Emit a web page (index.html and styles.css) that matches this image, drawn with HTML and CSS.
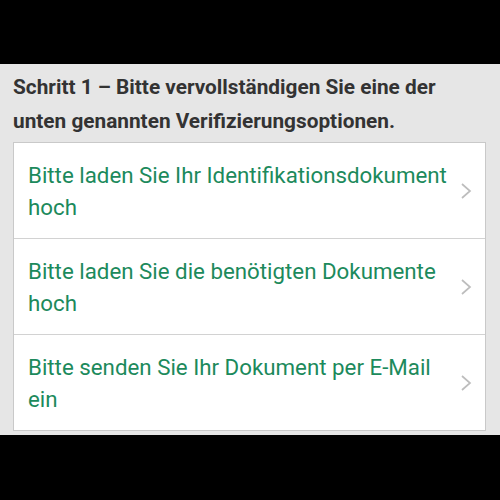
FILE: index.html
```html
<!DOCTYPE html>
<html lang="de">
<head>
<meta charset="utf-8">
<link rel="stylesheet" href="styles.css">
</head>
<body>
<div class="top"></div>
<main class="panel">
  <h1 class="title">Schritt 1 – Bitte vervollständigen Sie eine der unten genannten Verifizierungsoptionen.</h1>
  <ul class="card">
    <li class="item"><span class="label">Bitte laden Sie Ihr Identifikationsdokument hoch</span><svg class="chev" viewBox="0 0 12 16" width="12" height="16"><path d="M2 1l8 7-8 7" fill="none" stroke="#bdbdbd" stroke-width="1.7"/></svg></li>
    <li class="item"><span class="label">Bitte laden Sie die benötigten Dokumente hoch</span><svg class="chev" viewBox="0 0 12 16" width="12" height="16"><path d="M2 1l8 7-8 7" fill="none" stroke="#bdbdbd" stroke-width="1.7"/></svg></li>
    <li class="item"><span class="label">Bitte senden Sie Ihr Dokument per E-Mail ein</span><svg class="chev" viewBox="0 0 12 16" width="12" height="16"><path d="M2 1l8 7-8 7" fill="none" stroke="#bdbdbd" stroke-width="1.7"/></svg></li>
  </ul>
</main>
</body>
</html>
```
FILE: styles.css
```css
html, body {
  margin: 0;
  padding: 0;
  background: #000;
  width: 500px;
  height: 500px;
  overflow: hidden;
  font-family: Roboto, "Liberation Sans", sans-serif;
}
.top {
  height: 64px;
}
.panel {
  background: #e6e6e6;
  padding: 6px 14px 4px 13px;
}
.title {
  margin: 0 0 4px 0;
  font-size: 20.8px;
  line-height: 34px;
  font-weight: 700;
  color: #333;
}
.card {
  list-style: none;
  margin: 0;
  padding: 0;
  background: #fff;
  border: 1px solid #c9c9c9;
}
.item {
  display: flex;
  align-items: center;
  height: 96px;
  box-sizing: border-box;
  padding: 0 13px 0 14px;
  border-top: 1px solid #d2d2d2;
}
.item:first-child {
  border-top: none;
  height: 95px;
}
.label {
  flex: 1;
  font-size: 22.3px;
  line-height: 32px;
  color: #1c8a5c;
}
.chev {
  flex: none;
  margin-left: 4px;
}
```
